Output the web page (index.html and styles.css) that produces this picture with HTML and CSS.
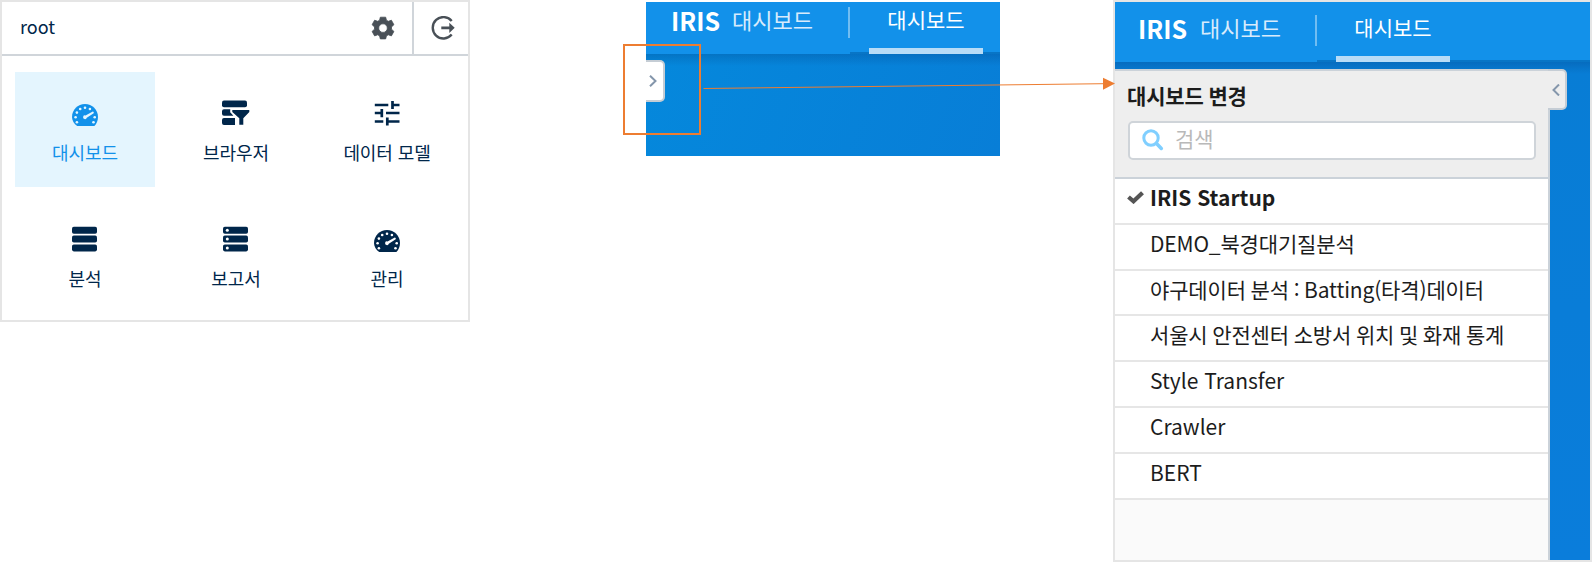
FILE: index.html
```html
<!DOCTYPE html>
<html lang="ko">
<head>
<meta charset="utf-8">
<title>IRIS 대시보드</title>
<link rel="stylesheet" href="styles.css">
</head>
<body>
<svg class="defs" width="0" height="0">
  <symbol id="gauge" viewBox="0 0 26 22">
    <path fill="currentColor" d="M5.2 22C2 19.800 0 16.600 0 13 0 5.800 5.800 0 13 0s13 5.800 13 13c0 3.600-1.400 6.800-3.600 9z"/>
    <g fill="var(--hole)"><circle cx="3.600" cy="13.200" r="1.300"/><circle cx="4.900" cy="8.600" r="1.300"/><circle cx="8.200" cy="5" r="1.300"/><circle cx="13" cy="3.700" r="1.300"/><circle cx="17.900" cy="5" r="1.300"/><circle cx="22.700" cy="13.200" r="1.300"/><circle cx="4.900" cy="18.200" r="1.300"/><circle cx="21.500" cy="18.200" r="1.300"/><path d="M20.800 7.600q1.500.3.900 1.600l-6.900 4.500a1.900 1.900 0 1 1-1.300-2.300z"/></g>
  </symbol>
</svg>
<main class="stage">
  <section class="launcher">
    <header class="user">
      <span class="user-name">root</span>
      <svg class="gear" width="24" height="24" viewBox="0 0 24 24"><path fill="#495057" fill-rule="evenodd" stroke="#495057" stroke-width=".8" stroke-linejoin="round" d="M9.300 1.200h5.400l.7 3 1.900 1.100 3.100-1.100 2.500 4.500-2.400 2.200v2.300l2.400 2.200-2.500 4.500-3.100-1.100-1.900 1.100-.7 3H9.300l-.7-3-1.900-1.100-3.100 1.100-2.500-4.500 2.400-2.200v-2.300L1.100 8.700l2.500-4.500 3.100 1.100 1.900-1.100zM12 7.800a4.300 4.300 0 1 0 0 8.600 4.300 4.300 0 0 0 0-8.600z"/></svg>
      <span class="logout"><svg width="24" height="24" viewBox="0 0 24 24"><path fill="none" stroke="#495057" stroke-width="2.400" d="M20.700 5A10.700 10.700 0 1 0 20.700 18.600"/><path fill="#495057" d="M10.300 10.400h8V6.700l5.400 5.100-5.400 5.100v-3.700h-8z"/></svg></span>
    </header>
    <nav class="apps">
      <a class="app active"><svg class="g" width="26" height="22"><use href="#gauge"/></svg><span>대시보드</span></a>
      <a class="app"><svg width="28" height="26" viewBox="0 0 28 26"><g fill="currentColor"><rect y=".5" width="25" height="6.800" rx="2"/><path d="M2 9.300h6.200v3l3.200 3.500H2q-2 0-2-2v-2.500q0-2 2-2zM2 18h11v7H2q-2 0-2-2v-3q0-2 2-2z"/><path stroke="#fff" stroke-width="1.500" paint-order="stroke" d="M10.300 10h17v2l-6 6.300v6.500h-4v-6.500l-7-6.300z"/></g></svg><span>브라우저</span></a>
      <a class="app"><svg width="26" height="26" viewBox="0 0 26 26"><path stroke="currentColor" stroke-width="2.700" d="M.8 5H14.300M18.500 5h7M18.500 1v8M.8 13h7M7.800 9v8.300M12 13h13.500M.8 21.500h8.500M13.300 17.500v8M13.300 21.500h12.200"/></svg><span>데이터 모델</span></a>
      <a class="app"><svg class="rack" width="25" height="26" viewBox="0 0 25 26"><g fill="currentColor"><rect y=".8" width="25" height="7" rx="1.800"/><rect y="9.600" width="25" height="7" rx="1.800"/><rect y="18.400" width="25" height="7" rx="1.800"/></g></svg><span>분석</span></a>
      <a class="app"><svg class="rack" width="25" height="26" viewBox="0 0 25 26"><g fill="currentColor"><rect y=".8" width="25" height="7" rx="1.800"/><rect y="9.600" width="25" height="7" rx="1.800"/><rect y="18.400" width="25" height="7" rx="1.800"/></g><g fill="#fff"><circle cx="4.300" cy="4.300" r="1.500"/><circle cx="4.300" cy="13.100" r="1.500"/><circle cx="4.300" cy="21.900" r="1.500"/></g></svg><span>보고서</span></a>
      <a class="app"><svg class="g" width="26" height="22"><use href="#gauge"/></svg><span>관리</span></a>
    </nav>
  </section>

  <section class="closed">
    <header class="bar">
      <b class="brand">IRIS</b><span class="product">대시보드</span>
      <span class="divider"></span>
      <span class="tab">대시보드</span>
    </header>
    <div class="canvas">
      <span class="handle"><svg width="8" height="12" viewBox="0 0 8 12"><path fill="none" stroke="#8496ab" stroke-width="2" d="M1 .7 6.500 6 1 11.300"/></svg></span>
    </div>
  </section>

  <section class="opened">
    <header class="bar">
      <b class="brand">IRIS</b><span class="product">대시보드</span>
      <span class="divider"></span>
      <span class="tab">대시보드</span>
    </header>
    <div class="canvas">
      <div class="drawer">
        <div class="drawer-head">
          <h2>대시보드 변경</h2>
          <div class="search"><svg width="22" height="22" viewBox="0 0 22 22"><g fill="none" stroke="#80cfff" stroke-width="3"><circle cx="9" cy="9" r="7.200"/><path stroke-width="3.600" stroke-linecap="round" d="m14.500 14.500 4.800 4.900"/></g></svg><span>검색</span></div>
        </div>
        <ul class="list">
          <li class="current"><svg width="17" height="13" viewBox="0 0 17 13"><path fill="none" stroke="#555" stroke-width="4.200" d="M1.500 6 6.500 10.300 15.500 1.700"/></svg>IRIS Startup</li>
          <li class="ko">DEMO_북경대기질분석</li>
          <li class="ko">야구데이터 분석 : Batting(타격)데이터</li>
          <li class="ko">서울시 안전센터 소방서 위치 및 화재 통계</li>
          <li>Style Transfer</li>
          <li>Crawler</li>
          <li>BERT</li>
        </ul>
      </div>
      <span class="handle"><svg width="8" height="12" viewBox="0 0 8 12"><path fill="none" stroke="#8496ab" stroke-width="2" d="M7 .5 1.500 6 7 11.500"/></svg></span>
    </div>
  </section>
</main>
<svg class="callout" width="500" height="100" viewBox="620 40 500 100"><rect x="624" y="45" width="76" height="89" fill="none" stroke="#ed7d31" stroke-width="2"/><path d="M703.500 88.500 1104 83.700" stroke="#ed7d31" stroke-width="1"/><path fill="#ed7d31" d="M1103 77.800 1115 83.500 1103 89.800z"/></svg>
</body>
</html>
```

FILE: styles.css
```css
* { box-sizing: border-box; }
body {
  margin: 0;
  background: #fff;
  color: #1c1c1c;
  font-family: "Noto Sans CJK KR", sans-serif;
  line-height: 1;
}
svg { display: block; flex: none; }
.defs { position: absolute; }
.stage { display: flex; align-items: flex-start; width: 1592px; height: 562px; overflow: hidden; }

.launcher { flex: none; width: 470px; height: 322px; border: 2px solid #e5e5e5; color: #00264a; font-size: 18px; }
.user { display: flex; align-items: center; height: 54px; border-bottom: 2px solid #d0d5da; }
.user-name { flex: 1; padding: 0 0 5px 18px; }
.gear { margin: 0 17px 0 0; }
.logout { display: flex; align-items: center; align-self: stretch; width: 56px; padding-left: 17px; border-left: 2px solid #d0d5da; }
.apps { display: grid; grid-template-columns: repeat(3, 140px); grid-auto-rows: 115px; gap: 11px; padding: 16px 13px; }
.app { --hole: #fff; display: flex; flex-direction: column; align-items: center; padding-top: 28px; letter-spacing: -.1px; }
.app svg { margin-bottom: 17px; }
.app .g { margin-top: 4px; }
.app .rack { margin-right: 1px; }
.app.active { --hole: #e4f5fe; background: #e4f5fe; color: #1291ea; }

.bar { display: flex; align-items: flex-start; background: #1291ea; color: #fff; }
.brand { font-size: 25px; }
.product { color: #d7ebfc; font-size: 22px; }
.divider { width: 2px; height: 31px; background: #70bdf2; }
.tab { width: 114px; border-bottom: 6px solid #b8dcf7; font-size: 21px; text-align: center; }
.handle { display: flex; align-items: center; border: 2px solid #c5cdd5; border-left: 0; border-radius: 0 5px 5px 0; }

.closed { flex: none; width: 354px; height: 154px; margin: 2px 0 0 176px; }
.closed .bar { height: 52px; padding-left: 25px; background: linear-gradient(#0875c6, #0875c6) 204px 50px / 150px 2px no-repeat #1291ea; }
.closed .brand { width: 61px; padding-top: 6px; }
.closed .product { width: 116px; padding-top: 6px; }
.closed .divider { margin-top: 5px; }
.closed .tab { height: 52px; margin-left: 19px; padding-top: 7px; }
.closed .canvas { height: 102px; padding-top: 6px; background: linear-gradient(rgba(0,55,120,.24), transparent 12px), linear-gradient(110deg, #0588dc, #087ed7); }
.closed .handle { width: 19px; height: 42px; padding-left: 3px; background: #fff; }

.opened { flex: none; width: 479px; height: 562px; margin-left: 113px; border: 2px solid #e5e5e5; }
.opened .bar { height: 60px; padding-left: 23px; background: linear-gradient(#0875c6, #0875c6) 202px 58px / 273px 2px no-repeat #1291ea; }
.opened .brand { width: 62px; padding-top: 14px; }
.opened .product { width: 115px; padding-top: 14px; }
.opened .divider { margin-top: 13px; }
.opened .tab { height: 60px; margin-left: 19px; padding-top: 15px; }
.opened .canvas { display: flex; align-items: flex-start; height: 498px; padding-top: 7px; background: linear-gradient(rgba(0,55,120,.24), transparent 12px), linear-gradient(#087dd5, #0a7ddb); }
.drawer { width: 435px; height: 491px; background: #fafafa; border-right: 2px solid #cbd2d9; }
.drawer-head { height: 110px; padding: 14px 12px 0 13px; background: #eee; border: solid #cbd2d9; border-width: 2px 0; }
.drawer-head h2 { margin: 0 0 15px -1px; font-size: 21px; line-height: 21px; letter-spacing: -.15px; word-spacing: -1px; }
.search { display: flex; align-items: center; height: 39px; padding-left: 12px; border: 2px solid #cfd4d9; border-radius: 5px; background: #fff; color: #b9b9b9; font-size: 21px; }
.search svg { margin-top: -2px; }
.search span { margin: -5px 0 0 11px; }
.list { display: grid; grid-template-rows: 46px 46px 45px repeat(4, 46px); margin: 0; padding: 0; list-style: none; font-size: 21px; }
.list li { display: flex; align-items: center; padding: 0 0 7px 35px; border-bottom: 2px solid #e6e6e6; background: #fff; white-space: nowrap; }
.list .ko { letter-spacing: -.15px; word-spacing: -1px; }
.list .current { padding-left: 12px; font-weight: 700; }
.current svg { margin-right: 6px; }
.opened .handle { width: 19px; height: 41px; margin-left: -2px; padding-left: 4px; background: #eee; }

/* annotation drawn across the two dashboard views */
.callout { position: absolute; left: 620px; top: 40px; }
```
